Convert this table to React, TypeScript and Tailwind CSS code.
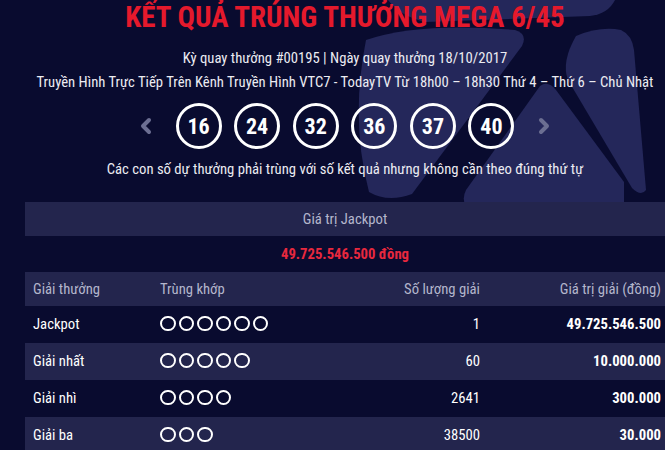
import { ChevronLeft, ChevronRight } from 'lucide-react';

const FONT = 'font-["Roboto_Condensed","Liberation_Sans_Narrow","DejaVu_Sans_Condensed",Roboto,sans-serif]';

const balls = ['16', '24', '32', '36', '37', '40'];

const prizes = [
  { name: 'Jackpot', match: 6, count: '1', value: '49.725.546.500' },
  { name: 'Giải nhất', match: 5, count: '60', value: '10.000.000' },
  { name: 'Giải nhì', match: 4, count: '2641', value: '300.000' },
  { name: 'Giải ba', match: 3, count: '38500', value: '30.000' },
];

// decorative ball logo behind the header
function BgLogo() {
  return (
    <svg className="absolute left-0 top-0" width="665" height="450" viewBox="0 0 665 450" fill="#24275a">
      <path d="M388 0 H615 Q608 14 590 16 L425 22 Q400 16 388 0 Z" />
      <path d="M366 40 Q420 22 515 30 Q528 34 522 46 L412 194 Q388 203 369 192 Q350 120 366 40 Z" />
      <path d="M540 86 Q548 80 556 90 L624 182 L624 210 L470 210 Q460 202 466 190 Z" />
      <path d="M576 36 Q600 26 621 30 Q632 35 634 50 L646 190 Q641 197 632 188 L568 80 Q561 62 576 36 Z" />
    </svg>
  );
}

export default function App() {
  return (
    <div className={`relative w-[665px] h-[450px] overflow-hidden bg-[#090b2f] ${FONT}`}>
      <BgLogo />
      <div className="relative pl-[25px]">
        <div className="w-[640px] flex flex-col items-center">
          <h1 className="text-[29px] leading-[34px] font-bold text-[#e5192c] whitespace-nowrap">
            KẾT QUẢ TRÚNG THƯỞNG MEGA 6/45
          </h1>
          <p className="mt-[14px] text-[14.7px] leading-[20px] text-[#ececf2] whitespace-nowrap">
            Kỳ quay thưởng #00195 | Ngày quay thưởng 18/10/2017
          </p>
          <p className="mt-[4px] text-[14.7px] leading-[20px] text-[#ececf2] whitespace-nowrap">
            Truyền Hình Trực Tiếp Trên Kênh Truyền Hình VTC7 - TodayTV Từ 18h00 – 18h30 Thứ 4 – Thứ 6 – Chủ Nhật
          </p>
          <div className="mt-[11px] flex items-center">
            <ChevronLeft className="w-6 h-6 text-[#6c6f92] mr-[18px]" strokeWidth={4} />
            <div className="flex gap-[12.6px]">
              {balls.map(b => (
                <div key={b} className="w-[46px] h-[46px] rounded-full border-[3px] border-white flex items-center justify-center text-[22px] font-bold text-white">
                  {b}
                </div>
              ))}
            </div>
            <ChevronRight className="w-6 h-6 text-[#6c6f92] ml-[18px]" strokeWidth={4} />
          </div>
          <p className="mt-[10px] text-[14.7px] leading-[20px] text-[#ececf2] whitespace-nowrap">
            Các con số dự thưởng phải trùng với số kết quả nhưng không cần theo đúng thứ tự
          </p>
        </div>

        <div className="mt-[23px] w-[640px] text-[14.7px]">
          <div className="h-[34px] flex items-center justify-center bg-[#23254d] text-[#b4b6cc]">Giá trị Jackpot</div>
          <div className="h-[36px] flex items-center justify-center bg-[#090b2f] text-[#e8283e] font-bold">49.725.546.500 đồng</div>
          <div className="h-[34px] grid grid-cols-[135px_200px_120px_185px] items-center bg-[#23254d] text-[#b4b6cc]">
            <span className="pl-2">Giải thưởng</span>
            <span>Trùng khớp</span>
            <span className="text-right">Số lượng giải</span>
            <span className="text-right pr-1">Giá trị giải (đồng)</span>
          </div>
          {prizes.map((p, i) => (
            <div
              key={p.name}
              className={`h-[37px] grid grid-cols-[135px_200px_120px_185px] items-center text-white ${i % 2 === 0 ? 'bg-[#090b2f]' : 'bg-[#23254d]'}`}
            >
              <span className="pl-2">{p.name}</span>
              <span className="flex gap-[3px] -mt-[2px]">
                {Array.from({ length: p.match }).map((_, k) => (
                  <span key={k} className="w-[15.5px] h-[15.5px] rounded-full border-[2.5px] border-white" />
                ))}
              </span>
              <span className="text-right">{p.count}</span>
              <span className="text-right pr-1 font-bold">{p.value}</span>
            </div>
          ))}
        </div>
      </div>
    </div>
  );
}
